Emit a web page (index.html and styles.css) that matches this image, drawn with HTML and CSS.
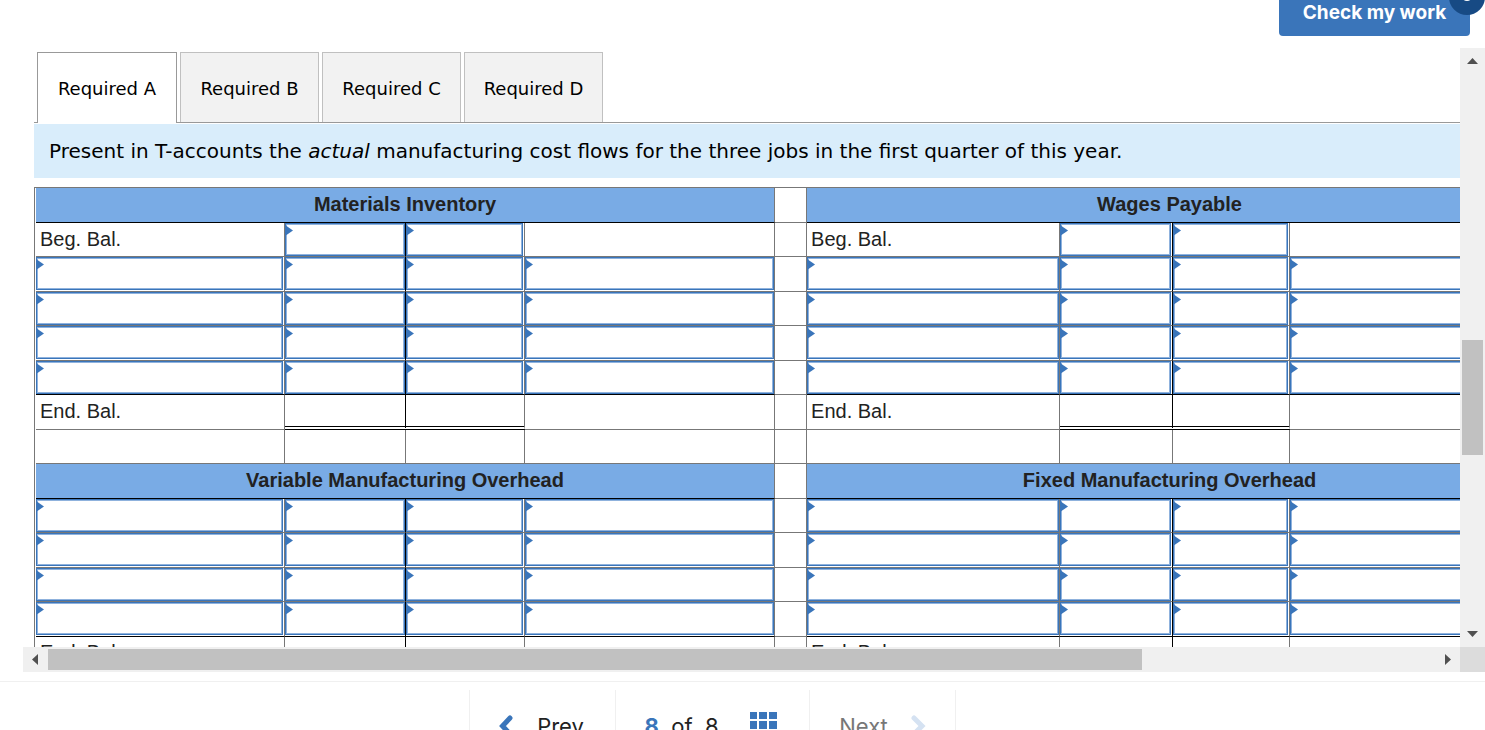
FILE: index.html
```html
<!DOCTYPE html>
<html lang="en">
<head>
<meta charset="utf-8">
<title>Required A</title>
<link rel="stylesheet" href="styles.css">
</head>
<body>
<header class="topbar">
  <button class="check" type="button">Check my work</button>
  <span class="badge"><svg width="12" height="12" viewBox="0 0 12 12"><circle cx="6" cy="6" r="6" fill="#fff"/></svg></span>
</header>
<main class="frame">
  <section class="view">
    <nav class="tabs">
      <button class="tab active" type="button">Required A</button>
      <button class="tab" type="button">Required B</button>
      <button class="tab" type="button">Required C</button>
      <button class="tab" type="button">Required D</button>
    </nav>
    <p class="prompt">Present in T-accounts the <em>actual</em> manufacturing cost flows for the three jobs in the first quarter of this year.</p>
    <div class="sheet">
      <table class="accounts">
        <colgroup>
          <col class="c1"><col class="c2"><col class="c3"><col class="c4"><col class="c5"><col class="c6"><col class="c7"><col class="c8"><col class="c9">
        </colgroup>
        <tbody id="rows"></tbody>
      </table>
    </div>
  </section>
  <div class="vbar">
    <svg class="arrow" width="25" height="25" viewBox="0 0 25 25"><path d="M7 16h11l-5.500-6z" fill="#505050"/></svg>
    <div class="vtrack"><div class="vthumb"></div></div>
    <svg class="arrow" width="25" height="25" viewBox="0 0 25 25"><path d="M7 9h11l-5.500 6z" fill="#505050"/></svg>
  </div>
  <div class="hbar">
    <svg class="arrow" width="25" height="25" viewBox="0 0 25 25"><path d="M15 7v11l-6-5.500z" fill="#505050"/></svg>
    <div class="htrack"><div class="hthumb"></div></div>
    <svg class="arrow" width="25" height="25" viewBox="0 0 25 25"><path d="M10 7v11l6-5.500z" fill="#505050"/></svg>
  </div>
  <div class="corner"></div>
</main>
<footer class="pager">
  <button class="step prev" type="button">
    <svg width="16" height="22" viewBox="0 0 16 22"><path d="M11 3L3.500 11l7.500 8" fill="none" stroke="#3a75ba" stroke-width="5" stroke-linecap="round"/></svg>
    <span>Prev</span>
  </button>
  <div class="position">
    <span><b>8</b>&nbsp; of &nbsp;8</span>
    <svg width="27" height="26" viewBox="0 0 27 26" fill="#3a75ba"><path d="M0 0h7v7H0zM9 0h8v7H9zM19 0h8v7h-8zM0 9h7v8H0zM9 9h8v8H9zM19 9h8v8h-8zM0 19h7v7H0zM9 19h8v7H9zM19 19h8v7h-8z"/></svg>
  </div>
  <button class="step next" type="button" disabled>
    <span>Next</span>
    <svg width="16" height="22" viewBox="0 0 16 22"><path d="M4 3l8 8-8 8" fill="none" stroke="#d5e2f2" stroke-width="5" stroke-linecap="round"/></svg>
  </button>
</footer>
<script src="rows.js"></script>
</body>
</html>
```
FILE: rows.js
```js
const layout = [
  { type: "title", names: ["Materials Inventory", "Wages Payable"] },
  { type: "begin" }, { type: "entry" }, { type: "entry" }, { type: "entry" },
  { type: "entry", last: true },
  { type: "end" }, { type: "blank" },
  { type: "title", names: ["Variable Manufacturing Overhead", "Fixed Manufacturing Overhead"] },
  { type: "entry" }, { type: "entry" }, { type: "entry" },
  { type: "entry", last: true },
  { type: "end" }
];
const sides = ["label debit", "amount debit", "amount credit", "label credit"];

function half(row, index) {
  if (row.type === "title") return `<th colspan="4" scope="colgroup">${row.names[index]}</th>`;
  return sides.map((side, i) => {
    const cls = `s${i + 1} h${index + 1}`;
    const field = `<td class="field ${cls}"><input type="text" aria-label="${side}"></td>`;
    if (row.type === "entry") return field;
    if (row.type === "begin" && (i === 1 || i === 2)) return field;
    const text = i > 0 ? "" : row.type === "begin" ? "Beg. Bal." : row.type === "end" ? "End. Bal." : "";
    return `<td class="${cls}">${text}</td>`;
  }).join("");
}

document.getElementById("rows").innerHTML = layout.map(row =>
  `<tr class="${row.type}${row.last ? " last" : ""}">${half(row, 0)}<td class="gap"></td>${half(row, 1)}</tr>`
).join("");
```
FILE: styles.css
```css
* { box-sizing: border-box; }
body {
  margin: 0;
  height: 100vh;
  overflow: hidden;
  display: flex;
  flex-direction: column;
  background: #fff;
  font-family: "Liberation Sans", Arial, sans-serif;
  color: #222;
}
button { font: inherit; cursor: pointer; }
svg { display: block; flex: none; }

.topbar {
  position: relative;
  flex: none;
  height: 48px;
  display: flex;
  justify-content: flex-end;
  align-items: flex-start;
  padding-right: 15px;
}
.check {
  width: 191px;
  height: 36px;
  padding: 0 0 11px;
  border: 0;
  border-radius: 0 0 4px 4px;
  background: #3a75ba;
  color: #fff;
  font-family: Inter, sans-serif;
  font-size: 19px;
  font-weight: 700;
}
.badge {
  position: absolute;
  top: -21px;
  right: 0;
  width: 36px;
  height: 36px;
  border-radius: 50%;
  background: #174a84;
  padding: 10px 12px;
}

.frame {
  flex: 1;
  min-height: 0;
  margin-left: 23px;
  display: grid;
  grid-template-columns: minmax(0, 1fr) 25px;
  grid-template-rows: minmax(0, 1fr) 25px;
}
.view { overflow: hidden; padding: 4px 0 0 11px; }
.vbar { background: #f0f0f0; display: flex; flex-direction: column; }
.vtrack { flex: 1; padding: 0 2px; }
.vthumb { height: 115px; margin-top: 267px; background: #c1c1c1; }
.hbar { background: #f0f0f0; display: flex; }
.htrack { flex: 1; padding: 2px 0; }
.hthumb { width: 78.9%; height: 100%; background: #c1c1c1; }
.corner { background: #dcdcdc; }

.tabs {
  display: flex;
  gap: 3px;
  padding-left: 3px;
  border-bottom: 1px solid #999;
}
.tab {
  width: 139px;
  height: 70px;
  padding: 2px 0 0;
  border: 1px solid #c0c0c0;
  border-bottom: 0;
  background: #f2f2f2;
  color: #000;
  font-family: "DejaVu Sans", Verdana, sans-serif;
  font-size: 18px;
}
.tab.active {
  width: 140px;
  height: 71px;
  margin-bottom: -1px;
  padding-top: 0;
  background: #fff;
  border-color: #999;
}
.prompt {
  margin: 1px 0 9px;
  padding: 12px 15px;
  background: #d9edfb;
  color: #000;
  font-family: "DejaVu Sans", Verdana, sans-serif;
  font-size: 20px;
  line-height: 30px;
  white-space: nowrap;
}

.sheet {
  width: 1499px;
  border: 1px solid #777;
  border-width: 1px 0 0 1px;
  padding-left: 1px;
}
.accounts {
  width: 100%;
  table-layout: fixed;
  border-collapse: separate;
  border-spacing: 0;
  font-size: 20px;
  line-height: 24px;
}
.c1 { width: 249px; }
.c2 { width: 121px; }
.c3 { width: 119px; }
.c4 { width: 250px; }
.c5 { width: 32px; }
.c6 { width: 253px; }
.c7 { width: 113px; }
.c8 { width: 117px; }
.c9 { width: 243px; }
tr { height: 34px; }
tr:nth-child(odd) { height: 35px; }
td, th {
  padding: 0 4px 2px;
  border: 1px solid #777;
  border-width: 0 1px 1px 0;
  text-align: left;
}
th {
  background: #79abe5;
  border-bottom-color: #000;
  text-align: center;
}
.field {
  position: relative;
  padding: 0;
  vertical-align: top;
}
.field::before {
  content: "";
  position: absolute;
  top: 2px;
  left: 0;
  width: 8px;
  height: 11px;
  background: #3a75ba;
  clip-path: polygon(0 0, 100% 50%, 0 100%);
}
.field input {
  display: block;
  width: 100%;
  height: 33px;
  padding: 0 8px;
  border: 1px solid #3a75ba;
  box-shadow: inset 0 0 0 1px #8fb2dd;
  background: #fff;
  font: inherit;
}
.s1.h1, .s3, .s2.h2 { padding-right: 1px; }
.s2 { border-right-color: #000; }
.blank .s2 { border-right-color: #777; }
.last .s1, .last .s2, .last .s3, .last .s4 { border-bottom-color: #000; }
.end .s1 { padding-bottom: 3px; }
.end .s2, .end .s3 { border-bottom: 4px double #000; }

.pager {
  flex: none;
  height: 49px;
  margin-top: 9px;
  padding: 8px 60px 0 0;
  border-top: 1px solid #f0f0f0;
  overflow: hidden;
  display: flex;
  justify-content: center;
  font-family: Inter, sans-serif;
  font-size: 22px;
  line-height: 26px;
}
.step, .position {
  height: 72px;
  display: flex;
  align-items: center;
  justify-content: center;
  border: 1px solid #f0f0f0;
  border-width: 0 0 0 1px;
  background: none;
  color: #222;
}
.step { width: 146px; gap: 22px; padding: 0; }
.prev { padding-right: 2px; }
.position { width: 194px; gap: 31px; padding-right: 4px; }
.position svg { margin-bottom: 2px; }
.position b { color: #3a75ba; }
.next { width: 147px; border-right-width: 1px; color: #777; }
```
